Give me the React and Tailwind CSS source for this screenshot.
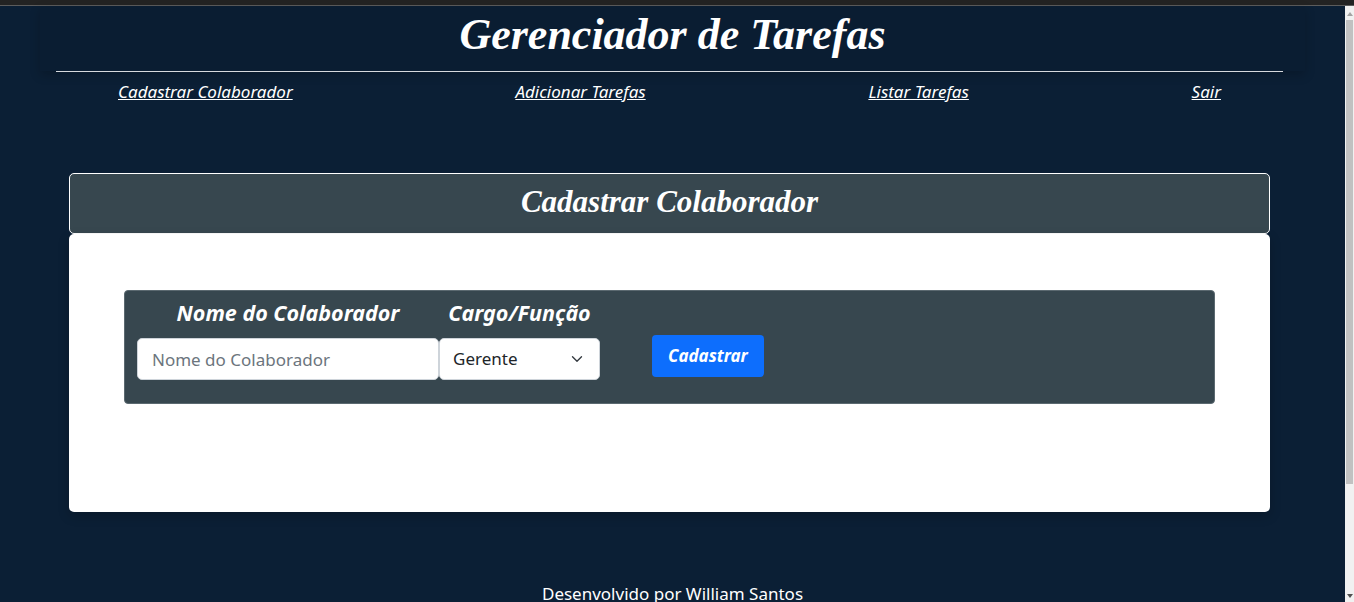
import React from "react";

const sans = "font-['Noto_Sans',sans-serif]";
const serif = "font-['Liberation_Serif',serif]";

const links = ["Cadastrar Colaborador", "Adicionar Tarefas", "Listar Tarefas", "Sair"];

const App = () => {
  return (
    <div className={`h-[602px] overflow-hidden flex flex-col bg-[#0b1f35] ${sans}`}>
      <div className="h-[6px] bg-[#232323] border-b border-[#5c5c5c]" />

      <div className="flex flex-1 min-h-0">
        <div className="flex-1 flex flex-col">
          {/* Header */}
          <header className="mx-[40px] h-[65px] pb-[8px] flex items-center justify-center bg-[#0a1d32] shadow-[0_4px_10px_rgba(0,0,0,0.2)]">
            <h1 className={`${serif} italic font-bold text-[44px] leading-none text-white`}>
              Gerenciador de Tarefas
            </h1>
          </header>
          <div className="ml-[56px] w-[1227px] h-px bg-[#d6d9dd]" />

          <nav className="ml-[56px] w-[1227px] px-[62px] mt-[8px] flex justify-between">
            {links.map((l) => (
              <a key={l} href="#" className="text-white italic underline text-[17px] leading-6">
                {l}
              </a>
            ))}
          </nav>

          {/* Card */}
          <section className="ml-[69px] w-[1201px] mt-[69px]">
            <div className="h-[61px] pb-[4px] flex items-center justify-center bg-[#37474f] border border-white rounded-[5px]">
              <h2 className={`${serif} italic font-bold text-[31px] text-white leading-none`}>
                Cadastrar Colaborador
              </h2>
            </div>
            <div className="h-[278px] bg-white rounded-[5px] shadow-[0_4px_12px_rgba(0,0,0,0.2)] px-[55px] pt-[56px]">
              <form
                onSubmit={(e) => e.preventDefault()}
                className="h-[114px] bg-[#37474f] rounded-[4px] border border-[#5b6970] px-[12px] pt-[8px] flex items-start"
              >
                <div className="flex flex-col items-center w-[302px]">
                  <label className="text-white font-bold italic text-[21.5px] leading-[27px]">
                    Nome do Colaborador
                  </label>
                  <input
                    type="text"
                    placeholder="Nome do Colaborador"
                    className="mt-[12px] w-full h-[42px] bg-white rounded-[5px] border border-[#ced4da] px-[14px] text-[17px] text-[#212529] placeholder:text-[#6c757d] outline-none"
                  />
                </div>
                <div className="flex flex-col items-center w-[161px]">
                  <label className="text-white font-bold italic text-[21.5px] leading-[27px]">
                    Cargo/Função
                  </label>
                  <div className="mt-[12px] w-full h-[42px] bg-white rounded-[5px] border border-[#ced4da] pl-[13px] pr-[16px] flex items-center justify-between">
                    <span className="text-[17px] text-[#212529]">Gerente</span>
                    <svg width="12" height="12" viewBox="0 0 16 16" fill="none" stroke="#343a40" strokeWidth="1.8" strokeLinecap="round" strokeLinejoin="round">
                      <path d="M2 5l6 6 6-6" />
                    </svg>
                  </div>
                </div>
                <button
                  type="submit"
                  className="ml-[52px] mt-[36px] h-[42px] px-[16px] bg-[#0d6efd] rounded-[4px] text-white font-bold italic text-[17px]"
                >
                  Cadastrar
                </button>
              </form>
            </div>
          </section>

          <footer className="mt-auto text-center text-white text-[17px] leading-6 translate-y-[4px]">
            Desenvolvido por William Santos
          </footer>
        </div>

        {/* scrollbar */}
        <div className="w-[9px] bg-[#f1f1f1] flex flex-col items-center">
          <div className="mt-[6px] w-0 h-0 border-x-[3px] border-x-transparent border-b-[4px] border-b-[#a3a3a3]" />
          <div className="mt-[4px] w-[7px] h-[464px] bg-[#c1c1c1]" />
          <div className="mt-auto mb-[4px] w-0 h-0 border-x-[3px] border-x-transparent border-t-[4px] border-t-[#505050]" />
        </div>
      </div>
    </div>
  );
};

export default App;
